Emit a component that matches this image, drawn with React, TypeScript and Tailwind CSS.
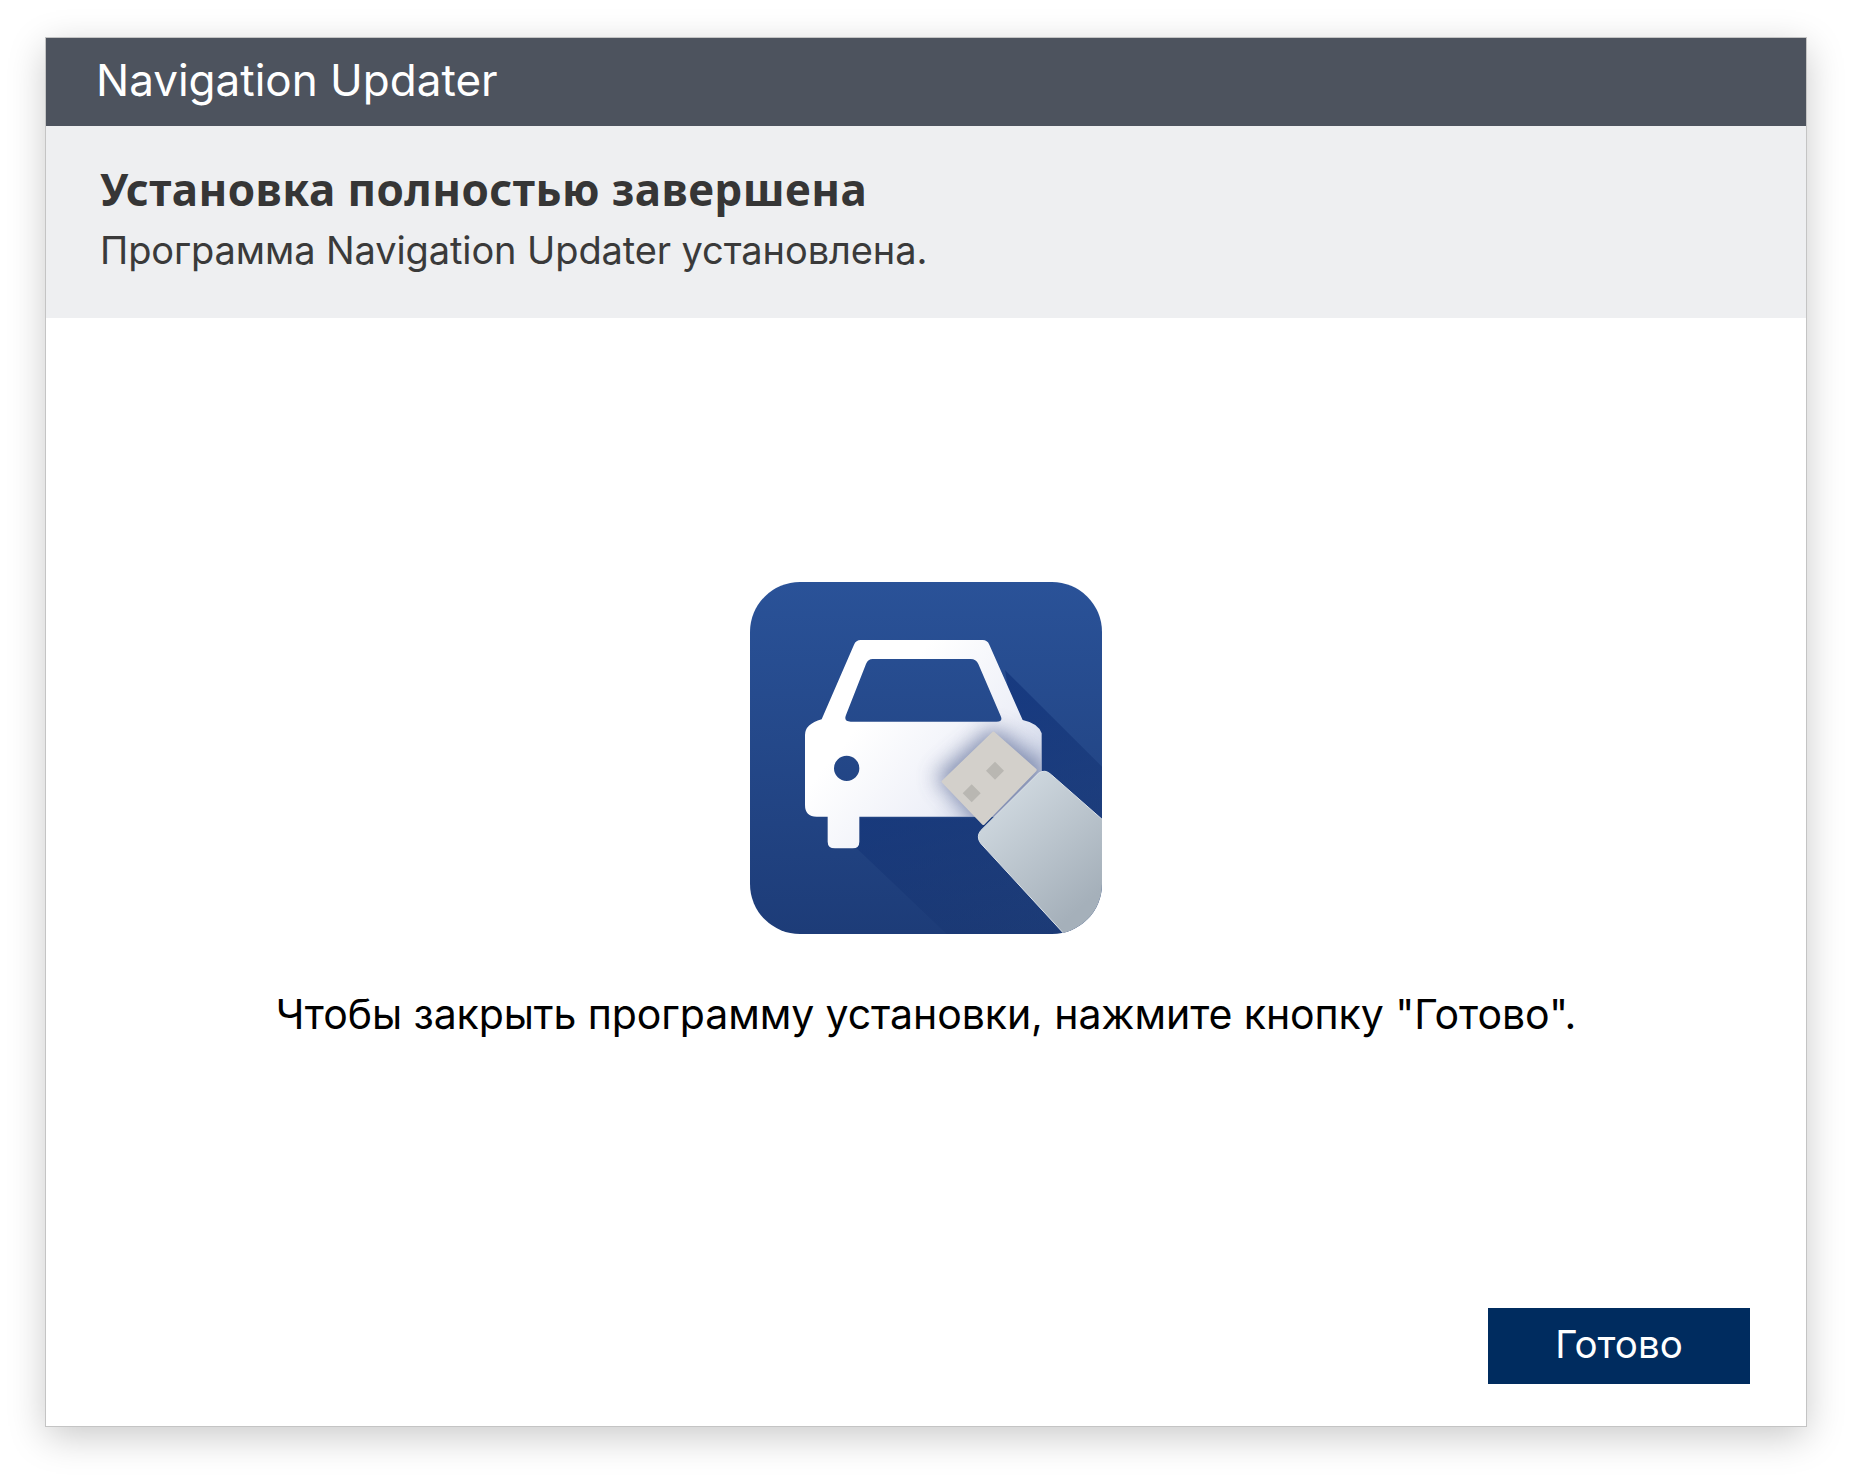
const carPath =
  "M392 240 H758 Q772 240 778 254 L878 480 Q925 490 935 520 V740 Q935 770 900 770 H388 V845 Q388 865 368 865 H315 Q293 865 293 845 V770 H260 Q225 770 225 735 V525 Q225 492 275 478 L372 254 Q378 240 392 240Z M428 297 H722 Q738 297 745 312 L812 468 Q820 485 800 485 H362 Q340 485 348 465 L408 312 Q414 297 428 297Z M350 587 A38 38 0 1 0 350 663 A38 38 0 1 0 350 587Z"

export default function App() {
  return (
    <div className="w-[1852px] h-[1480px] bg-white pt-[38px] pb-[54px] px-[46px] font-['Inter',sans-serif]">
      <div className="h-full flex flex-col bg-white shadow-[0_10px_36px_rgba(0,0,0,0.22)] outline outline-[#c4c4c4]">
        {/* Заголовок */}
        <div className="h-[88px] shrink-0 flex items-center pl-[50px] pb-[4px] bg-[#4d535e] text-white text-[44px]">
          Navigation Updater
        </div>

        <div className="h-[192px] shrink-0 bg-[#eeeff1] pl-[54px] pt-[35px]">
          <h1 className="font-['Noto_Sans',sans-serif] font-bold text-[44px] leading-[56px] tracking-[0.45px] text-[#363636]">
            Установка полностью завершена
          </h1>
          <p className="mt-[8px] text-[38px] leading-[50px] tracking-[-0.1px] text-[#3a3a3a]">
            Программа Navigation Updater установлена.
          </p>
        </div>

        <div className="flex-1 flex flex-col items-center pt-[264px] pb-[42px] px-[56px]">
          <UpdaterIcon />
          <p className="mt-[50px] text-[41px] leading-[60px] tracking-[-0.08px] text-black">
            Чтобы закрыть программу установки, нажмите кнопку "Готово".
          </p>
          <div className="mt-auto w-full flex justify-end">
            <button className="w-[262px] h-[76px] pb-[2px] bg-[#002c5f] text-white text-[38.5px]">Готово</button>
          </div>
        </div>
      </div>
    </div>
  )
}

function UpdaterIcon() {
  return (
    <svg className="w-[352px] h-[352px] shrink-0" viewBox="60 66 1056 1056">
      <defs>
        <clipPath id="tile">
          <rect x="60" y="66" width="1056" height="1056" rx="150" />
        </clipPath>
        <clipPath id="carClip">
          <path d={carPath} clipRule="evenodd" />
        </clipPath>
        <filter id="soft" x="-30%" y="-30%" width="160%" height="160%">
          <feGaussianBlur stdDeviation="32" />
        </filter>
        <linearGradient id="bg" x1="0" y1="0" x2="0" y2="1">
          <stop offset="0" stopColor="#2a5298" />
          <stop offset="1" stopColor="#1d3c78" />
        </linearGradient>
        <linearGradient id="longShadow" gradientUnits="userSpaceOnUse" x1="760" y1="480" x2="1040" y2="1040">
          <stop offset="0" stopColor="#14367c" stopOpacity="0.8" />
          <stop offset="1" stopColor="#14306a" stopOpacity="0.15" />
        </linearGradient>
        <linearGradient id="car" gradientUnits="userSpaceOnUse" x1="400" y1="480" x2="760" y2="780">
          <stop offset="0" stopColor="#ffffff" />
          <stop offset="0.7" stopColor="#eef0f8" />
          <stop offset="1" stopColor="#d5dbeb" />
        </linearGradient>
        <linearGradient id="usb" gradientUnits="userSpaceOnUse" x1="800" y1="700" x2="1080" y2="1020">
          <stop offset="0" stopColor="#d0d9e0" />
          <stop offset="1" stopColor="#a5b0ba" />
        </linearGradient>
      </defs>
      <g clipPath="url(#tile)">
        <rect x="60" y="66" width="1056" height="1056" fill="url(#bg)" />
        <path d="M825 330 L1116 620 V1122 H650 L375 860 L388 775 H900Z" fill="url(#longShadow)" />
        <path fillRule="evenodd" fill="url(#car)" d={carPath} />
        <g clipPath="url(#carClip)">
          <path d="M790 500 L960 630 L780 830 L615 650Z" fill="#5c6a96" opacity="0.75" filter="url(#soft)" />
        </g>
        <path d="M790 520 L915 630 L760 790 L640 665Z" fill="#d3d0cb" stroke="#d3d0cb" strokeWidth="10" strokeLinejoin="round" />
        <path d="M795 605 L822 632 L795 659 L768 632Z" fill="#b9b7b2" />
        <path d="M725 673 L752 700 L725 727 L698 700Z" fill="#b9b7b2" />
        <path
          d="M925 640 Q945 625 965 645 L1130 790 V1130 H1010 L752 850 Q738 830 752 812Z"
          fill="url(#usb)"
          stroke="#dde3e8"
          strokeWidth="3"
        />
      </g>
    </svg>
  )
}
